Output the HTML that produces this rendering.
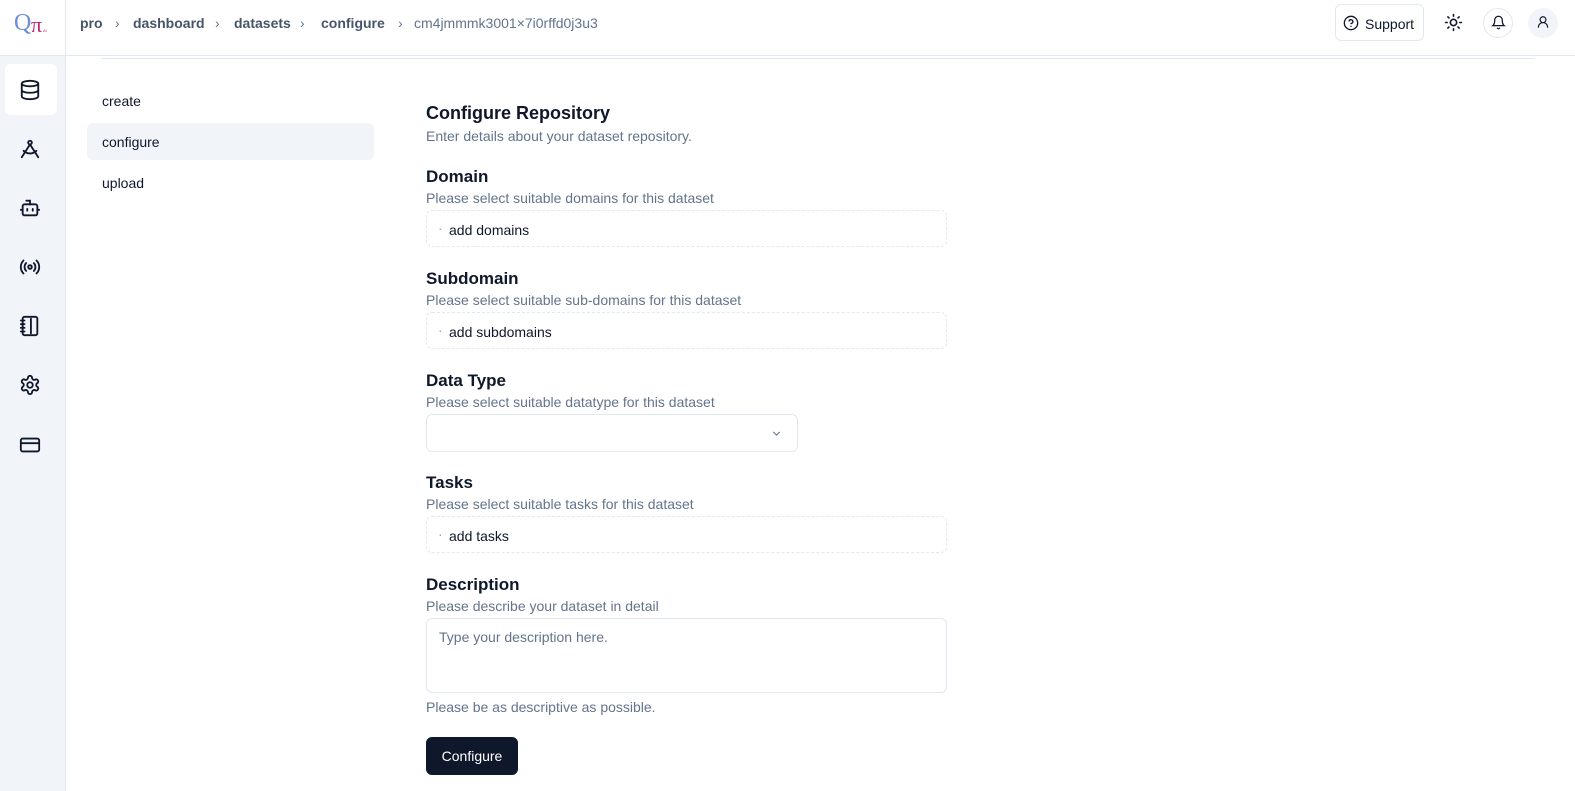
<!DOCTYPE html>
<html><head><meta charset="utf-8"><style>
*{box-sizing:border-box;margin:0;padding:0}
body{width:1575px;height:791px;overflow:hidden;background:#fff;font-family:"Liberation Sans",sans-serif;color:#0f172a;position:relative}
.abs{position:absolute}
.hdr{left:0;top:0;width:1575px;height:56px;border-bottom:1px solid #e2e8f0}
.logo{left:0;top:0;width:66px;height:56px;border-right:1px solid #e2e8f0}
.side{left:0;top:56px;width:66px;height:735px;background:#f1f5f9;border-right:1px solid #e2e8f0}
.crumb{position:absolute;top:15px;font-size:14px;color:#64748b}
.crumb.b{font-weight:bold;color:#475569}
.ico{position:absolute;left:19px}
.lbl{font-size:17px;font-weight:bold;color:#0f172a;left:426px}
.sub{font-size:14px;color:#64748b;left:426px}
.box{left:426px;width:521px;height:37px;border:1px dashed #e2e8f0;border-radius:6px;font-size:14px;padding:11px 0 0 22px;color:#0f172a}
.box:before{content:"·";position:absolute;left:11px;top:9px;color:#94a3b8}
</style></head><body>
<div class="abs hdr"></div>
<div class="abs logo"><span style="position:absolute;left:14px;top:10px;font-family:'Liberation Serif',serif;font-size:24px;color:#6b8fd6">Q</span><span style="position:absolute;left:31px;top:12px;font-family:'Liberation Serif',serif;font-size:22px;color:#c0267a">π</span><span style="position:absolute;left:43px;top:28px;font-size:4px;color:#c0267a">AI</span></div>
<span class="crumb b" style="left:80px">pro</span><span class="crumb" style="left:115px">›</span>
<span class="crumb b" style="left:133px">dashboard</span><span class="crumb" style="left:215px">›</span>
<span class="crumb b" style="left:234px">datasets</span><span class="crumb" style="left:300px">›</span>
<span class="crumb b" style="left:321px">configure</span><span class="crumb" style="left:398px">›</span>
<span class="crumb" style="left:414px">cm4jmmmk3001×7i0rffd0j3u3</span>
<div class="abs" style="left:1335px;top:4px;width:89px;height:37px;border:1px solid #e2e8f0;border-radius:6px;font-size:14px;padding:11px 0 0 29px">Support
<svg style="position:absolute;left:7px;top:10px" width="16" height="16" viewBox="0 0 24 24" fill="none" stroke="#0f172a" stroke-width="2" stroke-linecap="round"><circle cx="12" cy="12" r="10"/><path d="M9.1 9a3 3 0 0 1 5.8 1c0 2-3 3-3 3M12 17h.01"/></svg></div>
<svg class="abs" style="left:1444px;top:13px" width="19" height="19" viewBox="0 0 24 24" fill="none" stroke="#0f172a" stroke-width="2" stroke-linecap="round"><circle cx="12" cy="12" r="4"/><path d="M12 2v2M12 20v2M4.9 4.9l1.4 1.4M17.7 17.7l1.4 1.4M2 12h2M20 12h2M6.3 17.7l-1.4 1.4M19.1 4.9l-1.4 1.4"/></svg>
<div class="abs" style="left:1483px;top:8px;width:30px;height:30px;border:1px solid #e2e8f0;border-radius:50%"><svg style="position:absolute;left:7px;top:6px" width="15" height="15" viewBox="0 0 24 24" fill="none" stroke="#0f172a" stroke-width="2" stroke-linecap="round"><path d="M6 8a6 6 0 0 1 12 0c0 7 3 9 3 9H3s3-2 3-9M10.3 21a1.94 1.94 0 0 0 3.4 0"/></svg></div>
<div class="abs" style="left:1528px;top:8px;width:30px;height:30px;background:#f1f5f9;border-radius:50%"><svg style="position:absolute;left:8px;top:7px" width="14" height="14" viewBox="0 0 24 24" fill="none" stroke="#0f172a" stroke-width="2" stroke-linecap="round"><circle cx="12" cy="8" r="5"/><path d="M20 21a8 8 0 0 0-16 0"/></svg></div>

<div class="abs side">
<div style="position:absolute;left:5px;top:8px;width:52px;height:51px;background:#fff;border-radius:6px"></div>
<svg class="ico" style="top:23px" width="22" height="22" viewBox="0 0 24 24" fill="none" stroke="#0f172a" stroke-width="2"><ellipse cx="12" cy="5" rx="9" ry="3"/><path d="M3 5v14a9 3 0 0 0 18 0V5M3 12a9 3 0 0 0 18 0"/></svg>
<svg class="ico" style="top:82px" width="22" height="22" viewBox="0 0 24 24" fill="none" stroke="#0f172a" stroke-width="2" stroke-linecap="round"><circle cx="12" cy="5" r="2"/><path d="M12 7 3 21M12 7l9 14M5 14a10 10 0 0 0 14 0"/></svg>
<svg class="ico" style="top:141px" width="22" height="22" viewBox="0 0 24 24" fill="none" stroke="#0f172a" stroke-width="2" stroke-linecap="round"><path d="M12 8V4H8"/><rect x="4" y="8" width="16" height="12" rx="2"/><path d="M2 14h2M20 14h2M15 13v2M9 13v2"/></svg>
<svg class="ico" style="top:200px" width="22" height="22" viewBox="0 0 24 24" fill="none" stroke="#0f172a" stroke-width="2" stroke-linecap="round"><path d="M4.9 19.1C1 15.2 1 8.8 4.9 4.9M7.8 16.2c-2.3-2.3-2.3-6.1 0-8.5M16.2 7.8c2.3 2.3 2.3 6.1 0 8.5M19.1 4.9C23 8.8 23 15.1 19.1 19"/><circle cx="12" cy="12" r="2"/></svg>
<svg class="ico" style="top:259px" width="22" height="22" viewBox="0 0 24 24" fill="none" stroke="#0f172a" stroke-width="2" stroke-linecap="round"><path d="M13 4v16M2 6h4M2 10h4M2 14h4M2 18h4"/><rect x="4" y="2" width="16" height="20" rx="2"/></svg>
<svg class="ico" style="top:318px" width="22" height="22" viewBox="0 0 24 24" fill="none" stroke="#0f172a" stroke-width="2" stroke-linecap="round"><path d="M12.2 2h-.4a2 2 0 0 0-2 2v.2a2 2 0 0 1-1 1.7l-.4.3a2 2 0 0 1-2 0l-.2-.1a2 2 0 0 0-2.7.7l-.2.4a2 2 0 0 0 .7 2.7l.2.1a2 2 0 0 1 1 1.7v.5a2 2 0 0 1-1 1.7l-.2.1a2 2 0 0 0-.7 2.7l.2.4a2 2 0 0 0 2.7.7l.2-.1a2 2 0 0 1 2 0l.4.3a2 2 0 0 1 1 1.7v.2a2 2 0 0 0 2 2h.4a2 2 0 0 0 2-2v-.2a2 2 0 0 1 1-1.7l.4-.3a2 2 0 0 1 2 0l.2.1a2 2 0 0 0 2.7-.7l.2-.4a2 2 0 0 0-.7-2.700l-.2-.1a2 2 0 0 1-1-1.7v-.5a2 2 0 0 1 1-1.7l.2-.1a2 2 0 0 0 .7-2.7l-.2-.4a2 2 0 0 0-2.7-.7l-.2.1a2 2 0 0 1-2 0l-.4-.3a2 2 0 0 1-1-1.7V4a2 2 0 0 0-2-2z"/><circle cx="12" cy="12" r="3"/></svg>
<svg class="ico" style="top:378px" width="22" height="22" viewBox="0 0 24 24" fill="none" stroke="#0f172a" stroke-width="2"><rect x="2" y="5" width="20" height="14" rx="2"/><path d="M2 10h20"/></svg>
</div>

<div class="abs" style="left:101px;top:58px;width:1434px;height:1px;background:#e2e8f0"></div>
<div class="abs" style="left:102px;top:93px;font-size:14px">create</div>
<div class="abs" style="left:87px;top:123px;width:287px;height:37px;background:#f1f5f9;border-radius:6px"></div>
<div class="abs" style="left:102px;top:134px;font-size:14px">configure</div>
<div class="abs" style="left:102px;top:175px;font-size:14px">upload</div>

<div class="abs lbl" style="top:103px;font-size:18px">Configure Repository</div>
<div class="abs sub" style="top:128px">Enter details about your dataset repository.</div>
<div class="abs lbl" style="top:167px">Domain</div>
<div class="abs sub" style="top:190px">Please select suitable domains for this dataset</div>
<div class="abs box" style="top:210px">add domains</div>
<div class="abs lbl" style="top:269px">Subdomain</div>
<div class="abs sub" style="top:292px">Please select suitable sub-domains for this dataset</div>
<div class="abs box" style="top:312px">add subdomains</div>
<div class="abs lbl" style="top:371px">Data Type</div>
<div class="abs sub" style="top:394px">Please select suitable datatype for this dataset</div>
<div class="abs" style="left:426px;top:414px;width:372px;height:38px;border:1px solid #e2e8f0;border-radius:6px"><svg style="position:absolute;right:14px;top:12px" width="13" height="13" viewBox="0 0 24 24" fill="none" stroke="#64748b" stroke-width="2"><path d="m6 9 6 6 6-6"/></svg></div>
<div class="abs lbl" style="top:473px">Tasks</div>
<div class="abs sub" style="top:496px">Please select suitable tasks for this dataset</div>
<div class="abs box" style="top:516px">add tasks</div>
<div class="abs lbl" style="top:575px">Description</div>
<div class="abs sub" style="top:598px">Please describe your dataset in detail</div>
<div class="abs" style="left:426px;top:618px;width:521px;height:75px;border:1px solid #e2e8f0;border-radius:6px;font-size:14px;color:#64748b;padding:10px 12px">Type your description here.</div>
<div class="abs sub" style="top:699px">Please be as descriptive as possible.</div>
<div class="abs" style="left:426px;top:737px;width:92px;height:38px;background:#0f172a;border-radius:6px;color:#fff;font-size:14px;text-align:center;line-height:38px">Configure</div>
</body></html>
